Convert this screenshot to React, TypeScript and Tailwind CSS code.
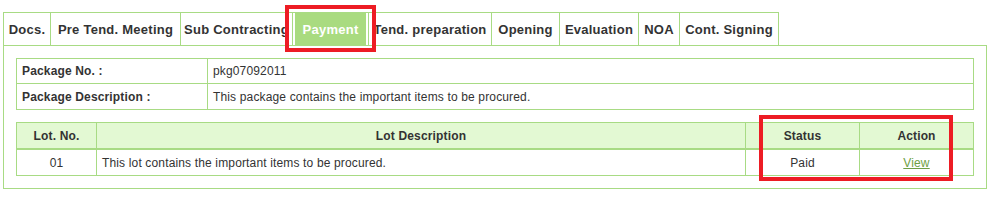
import React from 'react';

const tabs = [
  { label: 'Docs.', cls: 'w-[47px]' },
  { label: 'Pre Tend. Meeting', cls: 'w-[130px]' },
  { label: 'Sub Contracting', cls: 'w-[112px]' },
  { label: 'Payment', cls: 'w-[76px]', active: true },
  { label: 'Tend. preparation', cls: 'w-[123px]' },
  { label: 'Opening', cls: 'w-[68px]' },
  { label: 'Evaluation', cls: 'w-[79px]' },
  { label: 'NOA', cls: 'w-[41px]' },
  { label: 'Cont. Signing', cls: 'w-[100px] border-r' },
];

const Tabs: React.FC = () => (
  <div className="flex h-[33px]">
    {tabs.map((t) => (
      <div
        key={t.label}
        className={`${t.cls} box-border flex items-stretch border-t border-l border-[#a8db84] text-[13px] font-bold tracking-[0.25px] whitespace-nowrap`}
      >
        {t.active ? (
          <div className="flex flex-1 items-center justify-center pt-[1px] mx-[2px] bg-[#a9db80] text-white">{t.label}</div>
        ) : (
          <div className="flex flex-1 items-center justify-center pt-[1px] text-[#333]">{t.label}</div>
        )}
      </div>
    ))}
  </div>
);

const PackageTable: React.FC = () => (
  <div className="border border-[#a8db84] text-[12px]">
    <div className="flex h-[25px] border-b border-[#a8db84]">
      <div className="w-[191px] box-border border-r border-[#a8db84] flex items-center pl-[5px] font-bold text-[#333]">Package No. :</div>
      <div className="flex-1 flex items-center pl-[5px] text-[#333]">pkg07092011</div>
    </div>
    <div className="flex h-[25px]">
      <div className="w-[191px] box-border border-r border-[#a8db84] flex items-center pl-[5px] font-bold text-[#333]">Package Description :</div>
      <div className="flex-1 flex items-center pl-[5px] text-[#333]">This package contains the important items to be procured.</div>
    </div>
  </div>
);

const LotTable: React.FC = () => (
  <div className="mt-[12px] border border-[#a8db84] text-[12px] text-[#333]">
    <div className="flex h-[27px] bg-[#e3f9d3] border-b-2 border-[#a8db84] font-bold">
      <div className="w-[80px] box-border border-r border-[#a8db84] flex items-center justify-center">Lot. No.</div>
      <div className="w-[649px] box-border border-r border-[#a8db84] flex items-center justify-center">Lot Description</div>
      <div className="w-[114px] box-border border-r border-[#a8db84] flex items-center justify-center">Status</div>
      <div className="flex-1 flex items-center justify-center">Action</div>
    </div>
    <div className="flex h-[25px]">
      <div className="w-[80px] box-border border-r border-[#a8db84] flex items-center justify-center">01</div>
      <div className="w-[649px] box-border border-r border-[#a8db84] flex items-center pl-[5px]">This lot contains the important items to be procured.</div>
      <div className="w-[114px] box-border border-r border-[#a8db84] flex items-center justify-center">Paid</div>
      <div className="flex-1 flex items-center justify-center">
        <a href="#" className="text-[#6e9f45] underline">View</a>
      </div>
    </div>
  </div>
);

export default function App() {
  return (
    <div className="relative w-[994px] h-[201px] bg-white pt-[12px] pl-[3px] tracking-[0.15px] font-['Liberation_Sans',Arial,sans-serif]">
      <Tabs />
      <div className="w-[984px] box-border border border-[#a8db84] p-[12px]">
        <PackageTable />
        <LotTable />
      </div>
      <div className="absolute left-[285px] top-[5px] w-[91px] h-[47px] border-4 border-[#ed1c24]" />
      <div className="absolute left-[759px] top-[115px] w-[194px] h-[66px] border-4 border-[#ed1c24]" />
    </div>
  );
}
